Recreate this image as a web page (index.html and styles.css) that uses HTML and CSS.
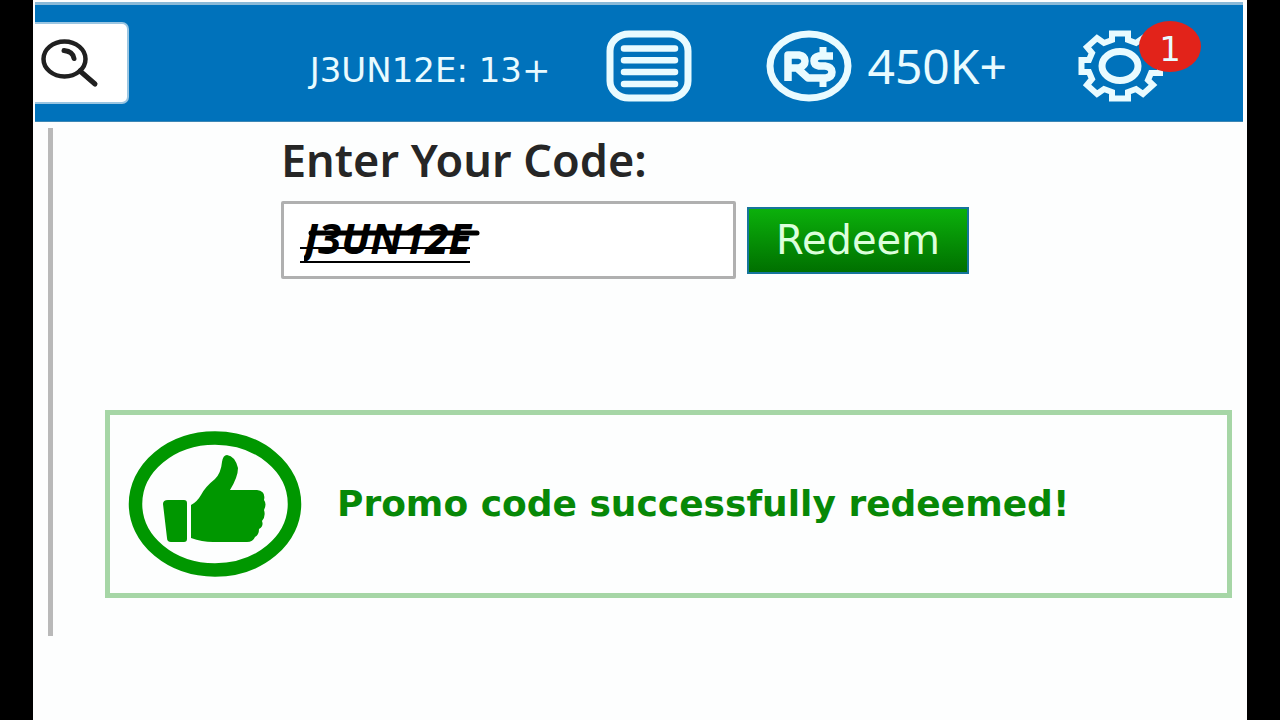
FILE: index.html
```html
<!DOCTYPE html>
<html lang="en">
<head>
<meta charset="utf-8">
<meta name="viewport" content="width=device-width, initial-scale=1">
<title>Redeem Promo Code</title>
<link rel="stylesheet" href="styles.css">
</head>
<body>
<div class="page">
  <header class="topbar">
    <button class="search" type="button" aria-label="Search">
      <svg class="search-icon" viewBox="0 0 58 50" fill="none" stroke="#202020" stroke-width="4.500" stroke-linecap="round">
        <ellipse cx="23.500" cy="21" rx="21" ry="17.500"/>
        <path d="M23 12.500q9 1 10 8M39 33l15 13" stroke-width="5"/>
      </svg>
    </button>
    <div class="account">
      <span class="username">J3UN12E: 13+</span>
      <button class="icon-button feed" type="button" aria-label="Feed">
        <svg class="round-icon" viewBox="0 0 86 72" fill="none" stroke="#e9fbff">
          <rect x="4" y="4" width="78" height="64" rx="19" ry="17" stroke-width="7"/>
          <path d="M18 18.500H69M18 30.300H69M18 42.100H69M18 53.900H69" stroke-width="6.500" stroke-linecap="round"/>
        </svg>
      </button>
      <button class="icon-button robux" type="button">
        <svg class="round-icon" viewBox="0 0 86 72" fill="none" stroke="#e9fbff" aria-hidden="true">
          <ellipse cx="43" cy="36" rx="39" ry="32" stroke-width="7"/>
          <path d="M22 51V25H33Q39 26 39 31T33 38H24M31 38L42 48H60Q66 47 66 42T59 36H53Q48 35 48 31T53 26H67" stroke-width="7.500" stroke-linejoin="round"/>
          <path d="M57 17V26M57 48V57" stroke-width="7"/>
        </svg>
        <span>450K+</span>
      </button>
      <button class="icon-button settings" type="button" aria-label="Settings, 1 notification">
        <svg class="gear-icon" viewBox="0 0 86 72" fill="none" stroke="#e9fbff" stroke-width="6" stroke-linejoin="miter">
          <path d="M34 10V3.500H50V10L58 13L65 8L75 17L69 23L73 30H82V43H73L70 50L75 55L65 64L58 59L50 62V68.500H34V62L26 59L19 64L9 55L14 49L11 42H3.500V30H11L14 23L9 17L19 8L26 13Z"/>
          <ellipse cx="42" cy="36" rx="18" ry="14.500" stroke-width="7"/>
        </svg>
        <span class="badge">1</span>
      </button>
    </div>
  </header>
  <main class="content">
    <form class="redeem">
      <label class="label" for="code">Enter Your Code:</label>
      <div class="row">
        <div class="field">
          <input class="code" id="code" type="text" value="J3UN12E">
          <svg class="strike" viewBox="0 0 180 40" stroke="#000" aria-hidden="true">
            <path d="M11 10H177" stroke-width="5" stroke-linecap="round"/>
            <path d="M0 25H170M0 39H170" stroke-width="2"/>
          </svg>
        </div>
        <button class="submit" type="button">Redeem</button>
      </div>
    </form>
    <section class="notice" role="status">
      <svg class="thumb" viewBox="0 0 174 146" aria-hidden="true">
        <ellipse cx="87" cy="73" rx="79.500" ry="66" fill="none" stroke="#009700" stroke-width="13.500"/>
        <path fill="#009700" d="M35 73Q35 69 40 69H56Q59 69 59 72V108Q59 111 56 111H43Q39 111 39 107ZM63 74Q69 71 73 64Q77 56 87 48Q93 42 94 31Q95 24 99 24Q107 25 110 37Q110 46 102 59H129Q138 60 136 69Q139 73 136 79Q138 85 134 90Q136 95 131 98Q131 104 127 106Q125 111 119 111H85Q74 111 63 107Z"/>
      </svg>
      <p class="message">Promo code successfully redeemed!</p>
    </section>
  </main>
</div>
</body>
</html>
```
FILE: styles.css
```css
* {
  box-sizing: border-box;
}

body {
  margin: 0;
  padding: 0 33px;
  background: #000;
  font-family: "Noto Sans", "Open Sans", sans-serif;
}

button {
  margin: 0;
  padding: 0;
  border: 0;
  background: none;
  color: inherit;
  font: inherit;
  cursor: pointer;
}

svg {
  display: block;
}

.page {
  min-height: 100vh;
  padding: 2px 4px 24px 2px;
  background: #fdfefe;
}

.topbar {
  display: flex;
  align-items: center;
  justify-content: space-between;
  height: 120px;
  padding-right: 42px;
  border-top: 3px solid #8bbad8;
  border-bottom: 1px solid #3c87b5;
  background: #0072bb;
  color: #e9fbff;
}

.search {
  width: 94px;
  height: 82px;
  padding-left: 6px;
  border: 2px solid #9bc6e2;
  border-left: 0;
  border-radius: 0 7px 7px 0;
  background: #fff;
}

.search-icon {
  width: 58px;
  height: 50px;
}

.account {
  display: flex;
  align-items: center;
  padding-top: 6px;
}

.username {
  margin-right: 56px;
  padding-top: 8px;
  font: 34px/40px "DejaVu Sans", sans-serif;
}

.icon-button {
  display: flex;
  align-items: center;
  gap: 15px;
}

.round-icon,
.gear-icon {
  width: 86px;
  height: 72px;
}

.feed {
  margin-right: 74px;
}

.robux {
  margin-right: 71px;
  font-size: 48px;
  line-height: 60px;
}

.settings {
  position: relative;
  padding-right: 37px;
}

.badge {
  position: absolute;
  top: -9px;
  right: 0;
  width: 62px;
  height: 51px;
  border-radius: 50%;
  background: #e2231a;
  font: 34px/56px "DejaVu Sans", sans-serif;
  text-align: center;
}

.content {
  min-height: 508px;
  margin: 6px 11px 0 13px;
  padding: 8px 0 0 52px;
  border-left: 5px solid #b9b9b9;
}

.redeem {
  padding-left: 176px;
}

.label {
  display: block;
  color: #262626;
  font-size: 45px;
  font-weight: 600;
  line-height: 48px;
}

.row {
  display: flex;
  align-items: center;
  gap: 11px;
  padding-top: 17px;
}

.field {
  position: relative;
  flex: 0 1 455px;
}

.code {
  display: block;
  width: 100%;
  height: 78px;
  padding: 0 20px 5px;
  border: 3px solid #b0b0b0;
  border-radius: 2px;
  background: #fff;
  color: #000;
  font: italic bold 42px "Noto Sans", sans-serif;
}

.strike {
  position: absolute;
  top: 22px;
  left: 19px;
  width: 180px;
  height: 40px;
  pointer-events: none;
}

.submit {
  width: 222px;
  height: 67px;
  border: 2px solid #16759b;
  background: linear-gradient(#0bb00b, #007000);
  color: #dcffdc;
  font: 40px "DejaVu Sans", sans-serif;
}

.notice {
  display: flex;
  align-items: center;
  gap: 35px;
  min-height: 188px;
  margin-top: 131px;
  padding: 0 18px;
  border: 5px solid #a6d6a6;
}

.thumb {
  flex: none;
  width: 174px;
  height: 146px;
}

.message {
  margin: 0;
  color: #078807;
  font: bold 36px/48px "DejaVu Sans", sans-serif;
}
```
